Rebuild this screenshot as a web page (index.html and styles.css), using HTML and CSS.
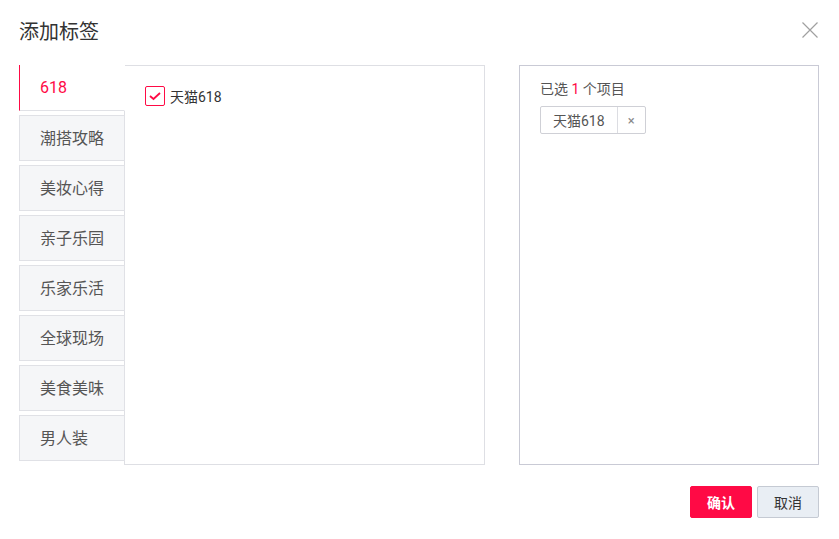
FILE: index.html
```html
<!DOCTYPE html>
<html lang="zh-CN">
<head>
    <meta charset="UTF-8">
    <title>添加标签</title>
    <link rel="stylesheet" href="styles.css">
</head>
<body>
    <div class="dialog">
        <div class="dialog-header">
            <h2 class="dialog-title">添加标签</h2>
            <span class="dialog-close">
                <svg width="16" height="16" viewBox="0 0 16 16"><path d="M0.5 0.5 L15.5 15.5 M15.5 0.5 L0.5 15.5" stroke="#a0a0a0" stroke-width="1.2" fill="none"/></svg>
            </span>
        </div>

        <div class="dialog-body">
            <div class="picker">
                <ul class="tabs">
                    <li class="tab active">618</li>
                    <li class="tab">潮搭攻略</li>
                    <li class="tab">美妆心得</li>
                    <li class="tab">亲子乐园</li>
                    <li class="tab">乐家乐活</li>
                    <li class="tab">全球现场</li>
                    <li class="tab">美食美味</li>
                    <li class="tab">男人装</li>
                </ul>
                <div class="options">
                    <label class="option">
                        <span class="checkbox checked">
                            <svg width="12" height="10" viewBox="0 0 12 10"><path d="M1 5 L4.5 8 L11 2" stroke="#ff0a45" stroke-width="1.8" fill="none"/></svg>
                        </span>
                        天猫618
                    </label>
                </div>
            </div>

            <div class="selected">
                <p class="selected-count">已选 <span class="num">1</span> 个项目</p>
                <div class="tag">
                    <span class="tag-text">天猫618</span>
                    <span class="tag-remove">×</span>
                </div>
            </div>
        </div>

        <div class="dialog-footer">
            <button class="btn btn-primary">确认</button>
            <button class="btn btn-default">取消</button>
        </div>
    </div>
</body>
</html>
```

FILE: styles.css
```css
/* 添加标签弹窗 */
* {
    box-sizing: border-box;
}

body {
    margin: 0;
    background: #ffffff;
    font-family: Roboto, "Noto Sans CJK SC", sans-serif;
    color: #333;
}

.dialog {
    width: 839px;
    height: 539px;
    padding: 0 20px 0 19px;
}

.dialog-header {
    display: flex;
    justify-content: space-between;
    align-items: center;
    height: 65px;
    padding-bottom: 5px;
}

.dialog-title {
    margin: 0;
    font-size: 20px;
    font-weight: normal;
    color: #333;
}

.dialog-close {
    display: flex;
    margin-right: 1px;
}

.dialog-body {
    display: flex;
    justify-content: space-between;
}

/* 左侧分类 + 选项 */
.picker {
    display: flex;
}

.tabs {
    list-style: none;
    margin: 0 -1px 0 0;
    padding: 0;
    width: 106px;
    position: relative;
    z-index: 1;
}

.tab {
    height: 46px;
    margin-bottom: 4px;
    padding: 0 0 2px 20px;
    display: flex;
    align-items: center;
    font-size: 16px;
    color: #555;
    background: #f5f6f8;
    border: 1px solid #e0e1e6;
}

.tab.active {
    background: #ffffff;
    color: #ff0a45;
    border-top: none;
    border-left: 1px solid #ff0a45;
    border-right-color: #ffffff;
    padding-bottom: 1px;
}

.tab:last-child {
    margin-bottom: 0;
}

.options {
    width: 361px;
    height: 400px;
    border: 1px solid #dedfe4;
    padding: 20px;
}

.option {
    display: flex;
    align-items: center;
    font-size: 14px;
    color: #333;
    cursor: pointer;
}

.checkbox {
    width: 20px;
    height: 20px;
    border: 1px solid #ff0a45;
    border-radius: 2px;
    margin-right: 5px;
    display: flex;
    align-items: center;
    justify-content: center;
}

/* 右侧已选 */
.selected {
    width: 300px;
    height: 400px;
    border: 1px solid #c9cad5;
    padding: 13px 20px;
}

.selected-count {
    margin: 0 0 7px;
    font-size: 14px;
    line-height: 20px;
    color: #555;
}

.num {
    color: #ff0a45;
}

.tag {
    display: inline-flex;
    height: 28px;
    border: 1px solid #cfd0d6;
    border-radius: 2px;
    font-size: 14px;
    color: #555;
}

.tag-text {
    display: flex;
    align-items: center;
    padding: 0 12px 1px;
    border-right: 1px solid #dcdde2;
}

.tag-remove {
    width: 27px;
    display: flex;
    align-items: center;
    justify-content: center;
    color: #888;
    font-size: 13px;
}

/* 底部按钮 */
.dialog-footer {
    display: flex;
    justify-content: flex-end;
    gap: 5px;
    margin-top: 21px;
}

.btn {
    width: 62px;
    height: 32px;
    border-radius: 2px;
    font-family: Roboto, "Noto Sans CJK SC", sans-serif;
    font-size: 14px;
    cursor: pointer;
}

.btn-primary {
    background: #ff0a45;
    border: 1px solid #ff0a45;
    color: #ffffff;
    font-weight: bold;
}

.btn-default {
    background: #e9eef4;
    border: 1px solid #c5cad3;
    color: #333;
}
```
